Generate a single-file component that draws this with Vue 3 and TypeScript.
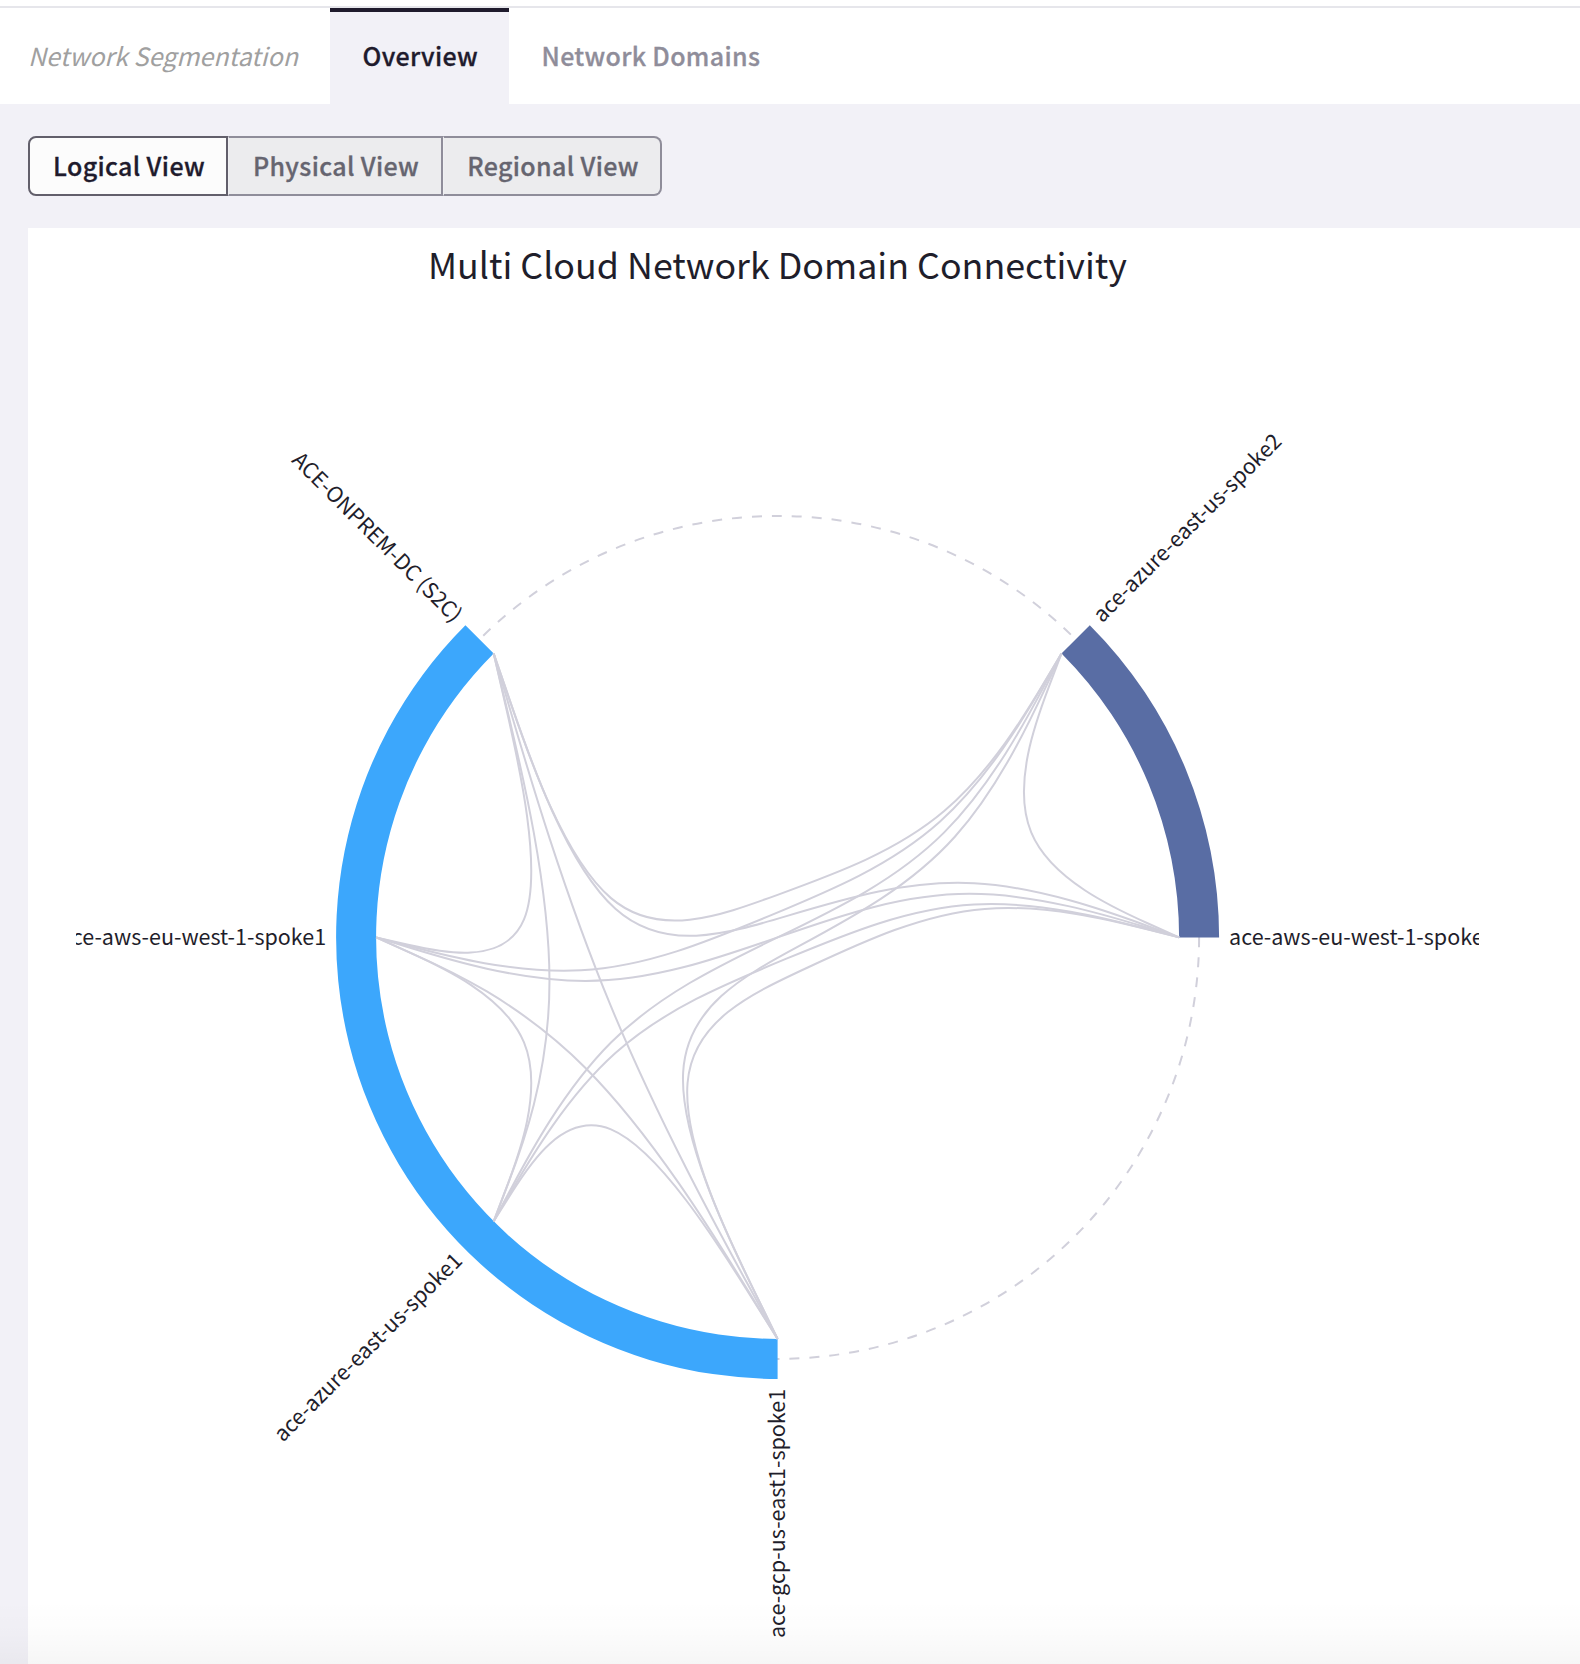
<script setup lang="ts">
import { ref } from 'vue'

interface Leaf { label: string; angle: number; group: number }

const cx = 701.6
const cy = 637.4
const inner = 401.5
const outer = 441.5
const middle = 421.5
const beta = 0.85

const leaves: Leaf[] = [
  { label: 'ace-azure-east-us-spoke2', angle: 45, group: 0 },
  { label: 'ace-aws-eu-west-1-spoke2', angle: 90, group: 0 },
  { label: 'ace-gcp-us-east1-spoke1', angle: 180, group: 1 },
  { label: 'ace-azure-east-us-spoke1', angle: 225, group: 1 },
  { label: 'ace-aws-eu-west-1-spoke1', angle: 270, group: 1 },
  { label: 'ACE-ONPREM-DC (S2C)', angle: 315, group: 1 },
]
const groups = [
  { from: 45, to: 90, mid: 67.5, color: '#596da4' },
  { from: 180, to: 315, mid: 247.5, color: '#3ca7fc' },
]

type Pt = [number, number]
function polar(angle: number, r: number): Pt {
  const a = (angle * Math.PI) / 180
  return [cx + r * Math.sin(a), cy - r * Math.cos(a)]
}

function band(from: number, to: number): string {
  const large = to - from > 180 ? 1 : 0
  return `M${polar(from, outer)}A${outer},${outer} 0 ${large} 1 ${polar(to, outer)}` +
    `L${polar(to, inner)}A${inner},${inner} 0 ${large} 0 ${polar(from, inner)}Z`
}

// Bundled B-spline running through the hierarchy nodes between two leaves
function bundle(a: Leaf, b: Leaf): string {
  const raw: Pt[] = [polar(a.angle, inner), polar(groups[a.group].mid, inner / 2)]
  if (a.group !== b.group) raw.push([cx, cy], polar(groups[b.group].mid, inner / 2))
  raw.push(polar(b.angle, inner))
  const n = raw.length - 1
  const p: Pt[] = raw.map((q, i) => [0, 1].map(
    k => beta * q[k] + (1 - beta) * (raw[0][k] + (i / n) * (raw[n][k] - raw[0][k])),
  ) as Pt)
  const mix = (u: Pt, v: Pt, s: number, t: number): Pt =>
    [(u[0] * s + v[0] * t) / (s + t), (u[1] * s + v[1] * t) / (s + t)]
  let d = `M${p[0]}L${mix(p[0], p[1], 5, 1)}`
  for (let i = 1; i <= n; i++) {
    const next = p[Math.min(i + 1, n)]
    const end: Pt = [(p[i - 1][0] + 4 * p[i][0] + next[0]) / 6, (p[i - 1][1] + 4 * p[i][1] + next[1]) / 6]
    d += `C${mix(p[i - 1], p[i], 2, 1)} ${mix(p[i - 1], p[i], 1, 2)} ${end}`
  }
  return d + `L${p[n]}`
}

const links: string[] = []
leaves.forEach((a, i) => leaves.slice(i + 1).forEach(b => links.push(bundle(a, b))))

function labelTransform(l: Leaf): string {
  const [x, y] = polar(l.angle, outer + 10)
  return `translate(${x},${y}) rotate(${l.angle >= 180 ? l.angle - 270 : l.angle - 90})`
}

const half = `${middle},${middle} 0 0 1`
const ring = `M${polar(90, middle)}A${half} ${polar(270, middle)}A${half} ${polar(90, middle)}`

const views = ['Logical View', 'Physical View', 'Regional View']
const active = ref(0)
</script>

<template>
  <div class="page">
    <header class="tabs">
      <span class="crumb">Network Segmentation</span>
      <a class="tab tab--active">Overview</a>
      <a class="tab">Network Domains</a>
    </header>
    <nav class="views">
      <button v-for="(v, i) in views" :key="v" class="view" :class="{ 'view--on': i === active }" @click="active = i">{{ v }}</button>
    </nav>
    <main class="panel">
      <h1 class="title">Multi Cloud Network Domain Connectivity</h1>
      <svg class="chart" width="1403" height="1364" viewBox="0 0 1403 1364">
        <path class="ring" :d="ring" />
        <path v-for="g in groups" :key="g.from" :d="band(g.from, g.to)" :fill="g.color" />
        <path v-for="(d, i) in links" :key="i" class="link" :d="d" />
        <text v-for="l in leaves" :key="l.label" class="label" y="7.6" :transform="labelTransform(l)" :text-anchor="l.angle >= 180 ? 'end' : 'start'">{{ l.label }}</text>
      </svg>
    </main>
    <div class="fade"></div>
  </div>
</template>

<style>
body { margin: 0; overflow: hidden; }
</style>
<style scoped>
.page { position: relative; width: 1580px; height: 1664px; overflow: hidden; background: #f2f1f7; color: #1f1e2b; font-family: "Noto Sans CJK SC", "Noto Sans", sans-serif; box-sizing: border-box; border-top: 6px solid #fff; }
.tabs { display: flex; height: 96px; border-top: 2px solid #e6e6eb; background: #fff; font-size: 25px; line-height: 94px; white-space: nowrap; }
.crumb { width: 330px; box-sizing: border-box; padding-left: 28px; font-style: italic; letter-spacing: .03px; color: #a0a0a0; }
.tab { box-sizing: border-box; height: 96px; padding: 0 32.5px; border-top: 4px solid transparent; line-height: 86px; font-weight: 500; letter-spacing: .32px; -webkit-text-stroke: .3px currentColor; color: #8f8d9a; }
.tab--active { width: 179px; background: #f2f1f7; border-top-color: #1f1b2d; color: #1f1b2d; }
.views { display: flex; padding: 32px 0 32px 28px; }
.view { height: 60px; width: 215px; box-sizing: border-box; padding: 0 0 2px 2px; border: 2px solid #8f8d9a; border-left: 1px solid #f0f0f3; background: #ececee; color: #666570; font: 500 25px "Noto Sans CJK SC", sans-serif; letter-spacing: .36px; -webkit-text-stroke: .3px currentColor; white-space: nowrap; }
.view--on { width: 200px; border: 2px solid #625f6b; border-radius: 8px 0 0 8px; background: #fcfcfc; color: #1f1b2d; }
.view:last-child { width: 219px; border-radius: 0 8px 8px 0; }
.panel { margin-left: 28px; height: 1436px; background: #fff; display: flex; flex-direction: column; }
.title { margin: 0; height: 72px; line-height: 71px; width: 1499px; text-align: center; font-size: 35.8px; font-weight: 400; white-space: nowrap; }
.chart { display: block; margin-left: 48px; flex: none; overflow: hidden; }
.ring { fill: none; stroke: #d1d0db; stroke-width: 2; stroke-dasharray: 10 10; }
.link { fill: none; stroke: #d1d0db; stroke-width: 2; }
.label { font-size: 21.5px; fill: #1f1e2b; }
.fade { position: absolute; left: 0; right: 0; bottom: 0; height: 64px; background: linear-gradient(rgba(0,0,0,0), rgba(0,0,0,.01) 50%, rgba(0,0,0,.035)); pointer-events: none; }
</style>
